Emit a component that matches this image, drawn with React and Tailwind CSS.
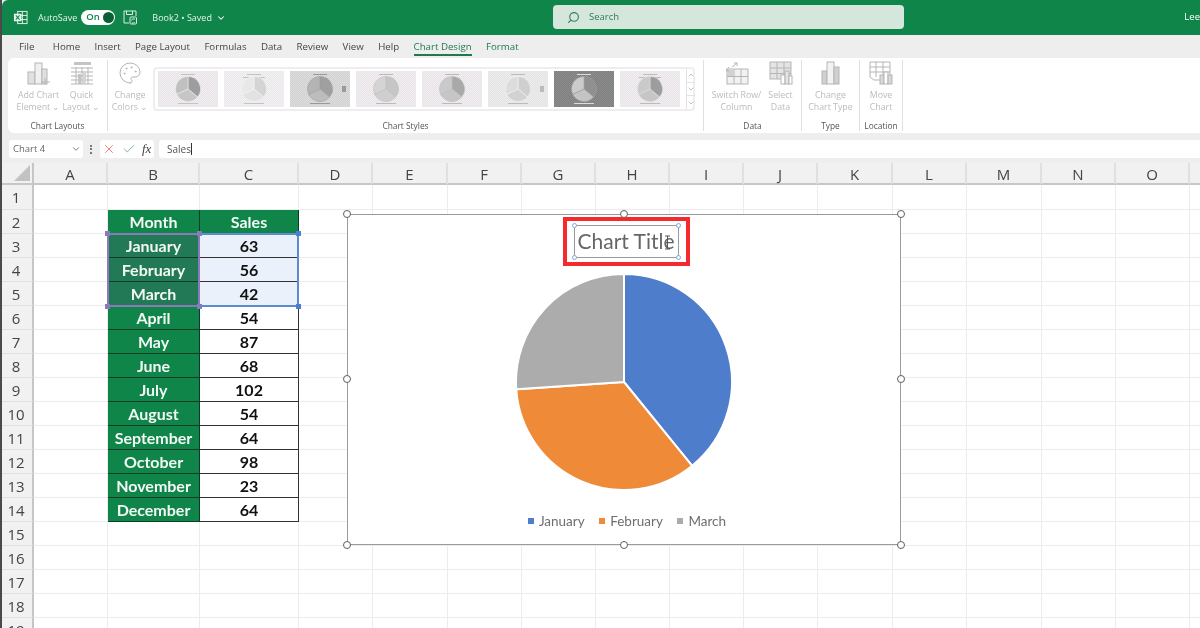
import { Palette, Search, ChevronDown, ChevronUp, Check, X } from 'lucide-react'

const tabs = ['Home', 'Insert', 'Page Layout', 'Formulas', 'Data', 'Review', 'View', 'Help']
const columns = ['A', 'B', 'C', 'D', 'E', 'F', 'G', 'H', 'I', 'J', 'K', 'L', 'M', 'N', 'O', '']
const rowNumbers = Array.from({ length: 19 }, (_, i) => i + 1)
const sales = [
  ['Month', 'Sales'],
  ['January', 63],
  ['February', 56],
  ['March', 42],
  ['April', 54],
  ['May', 87],
  ['June', 68],
  ['July', 102],
  ['August', 54],
  ['September', 64],
  ['October', 98],
  ['November', 23],
  ['December', 64],
]
const slices = [
  { label: 'January', value: 63, color: '#4e7dcb' },
  { label: 'February', value: 56, color: '#ee8a38' },
  { label: 'March', value: 42, color: '#acacac' },
]
const thumbs = [
  { bg: '#f3f0f3', dot: '#e6e2e6', a: '#9d9d9d', b: '#c6c6c6', c: '#c0c0c0', line: '#eeeeee', title: '#c4c4c4' },
  { bg: '#f5f2f5', dot: '#e9e6e9', a: '#d4d4d4', b: '#e2e2e2', c: '#e8e8e8', line: '#f5f5f5', title: '#c4c4c4', sub: true },
  { bg: '#dedede', dot: '#d0d0d0', a: '#a0a0a0', b: '#bcbcbc', c: '#b4b4b4', line: '#9f9f9f', title: '#9a9a9a', legend: true },
  { bg: '#f3f0f3', dot: '#e6e2e6', a: '#c6c6c6', b: '#cfcfcf', c: '#d4d4d4', line: '#bdbdbd', title: '#bbbbbb' },
  { bg: '#f3f0f3', dot: '#e6e2e6', a: '#a9a9a9', b: '#c6c6c6', c: '#cacaca', line: '#bdbdbd', title: '#bbbbbb' },
  { bg: '#ececec', dot: '#e4e4e4', a: '#cfcfcf', b: '#d2d2d2', c: '#dcdcdc', line: '#f5f5f5', title: '#bbbbbb', legend: true },
  { bg: '#8e8e8e', dot: '#7e7e7e', a: '#909090', b: '#c4c4c4', c: '#cbcbcb', line: '#a0a0a0', title: '#dddddd' },
  { bg: '#f3f0f3', dot: '#e6e2e6', a: '#9d9d9d', b: '#c6c6c6', c: '#cacaca', line: '#dddddd', title: '#bbbbbb', sub: true },
]

function slicePath(startDeg, endDeg, r, cx, cy) {
  const a = (startDeg * Math.PI) / 180
  const b = (endDeg * Math.PI) / 180
  const large = endDeg - startDeg > 180 ? 1 : 0
  return `M${cx} ${cy}L${cx + r * Math.sin(a)} ${cy - r * Math.cos(a)}A${r} ${r} 0 ${large} 1 ${cx + r * Math.sin(b)} ${cy - r * Math.cos(b)}Z`
}

function PieChart() {
  const total = slices.reduce((sum, s) => sum + s.value, 0)
  let angle = 0
  return (
    <svg width="220" height="220" viewBox="0 0 220 220" className="block">
      {slices.map((s) => {
        const start = angle
        angle += (s.value / total) * 360
        return <path key={s.label} d={slicePath(start, angle, 108, 110, 110)} fill={s.color} stroke="#fff" strokeWidth="2" />
      })}
    </svg>
  )
}

function Thumb({ index, bg, dot, a, b, c, line, title, sub, legend }) {
  const id = `dither${index}`
  return (
    <svg width="60" height="36" viewBox="0 0 60 36" className="block shrink-0">
      <defs>
        <pattern id={id} width="2" height="2" patternUnits="userSpaceOnUse">
          <rect width="2" height="2" fill={bg} />
          <rect width="1" height="1" fill={dot} />
          <rect x="1" y="1" width="1" height="1" fill={dot} />
        </pattern>
      </defs>
      <rect width="60" height="36" fill={`url(#${id})`} />
      <rect x="23" y="3" width="14" height="1" fill={title} />
      {sub && <rect x="19" y="6" width="22" height="1" fill={title} />}
      <path d={slicePath(0, 130, 12.5, 30, 18)} fill={a} stroke={line} strokeWidth="0.6" />
      <path d={slicePath(130, 245, 12.5, 30, 18)} fill={b} stroke={line} strokeWidth="0.6" />
      <path d={slicePath(245, 360, 12.5, 30, 18)} fill={c} stroke={line} strokeWidth="0.6" />
      <rect x="20" y="32" width="20" height="1" fill={title} />
      {legend && <rect x="52" y="15" width="4" height="6" fill={title} />}
    </svg>
  )
}

function RibbonButton({ icon, lines, width = 'w-[43px]' }) {
  return (
    <div className={`flex flex-col items-center shrink-0 ${width}`}>
      <div className="h-[26px] flex items-center justify-center">{icon}</div>
      <div className="mt-[3px] text-center text-[8.8px] leading-[12px] text-[#bbbbbb] whitespace-nowrap">
        {lines.map((l) => (
          <div key={l}>{l}</div>
        ))}
      </div>
    </div>
  )
}

function Group({ label, width, children, inner = 'justify-center' }) {
  return (
    <div className={`${width} shrink-0 h-[71px] mt-[2px] border-r border-[#e0e0e0] flex flex-col items-center`}>
      <div className={`flex items-start w-full h-[54px] ${inner}`}>{children}</div>
      <div className="mt-auto mb-[-1px] text-[8.4px] leading-[12px] text-[#555] whitespace-nowrap">{label}</div>
    </div>
  )
}

const iconStroke = { fill: 'none', stroke: '#b5b5b5', strokeWidth: 1 }

function AddChartIcon() {
  return (
    <svg width="24" height="25" viewBox="0 0 24 25">
      <rect x="1" y="11" width="7" height="12" fill="#e0e0e0" stroke="#b5b5b5" />
      <rect x="8" y="2" width="7" height="21" fill="#f0f0f0" stroke="#b5b5b5" />
      <rect x="15" y="8" width="5" height="15" fill="#e0e0e0" stroke="#b5b5b5" />
      <path d="M18 17v7M14 21h9" {...iconStroke} />
    </svg>
  )
}

function QuickLayoutIcon() {
  return (
    <svg width="24" height="24" viewBox="0 0 24 24">
      <rect x="4" y="1" width="17" height="3" fill="#c4c4c4" />
      <path d="M1 7h22M1 11h22M1 15h22M1 19h22M1 23h22M6 6v17M12 6v17M18 6v17" {...iconStroke} />
      <rect x="8" y="13" width="3" height="10" fill="#c4c4c4" />
      <rect x="13" y="10" width="3" height="13" fill="#d4d4d4" />
    </svg>
  )
}

function SwitchIcon() {
  return (
    <svg width="24" height="24" viewBox="0 0 24 24">
      <rect x="2" y="8" width="21" height="15" fill="#f2f2f2" stroke="#b5b5b5" />
      <path d="M2 15.5h21M9 8v15M16 8v15" {...iconStroke} />
      <rect x="2" y="8" width="7" height="7" fill="#d2d2d2" />
      <path d="M7 6l5-4M12 2v3M12 2H9M1 10l3-4M1 10h3" {...iconStroke} />
    </svg>
  )
}

function SelectDataIcon() {
  return (
    <svg width="24" height="24" viewBox="0 0 24 24">
      <rect x="1" y="1" width="21" height="17" fill="#e4e4e4" stroke="#b5b5b5" />
      <path d="M1 7h21M1 12.5h21M8 1v17M15 1v17" {...iconStroke} />
      <rect x="12" y="14" width="4" height="9" fill="#fff" stroke="#b5b5b5" />
      <rect x="16" y="10" width="4" height="13" fill="#e4e4e4" stroke="#b5b5b5" />
      <rect x="20" y="15" width="3" height="8" fill="#fff" stroke="#b5b5b5" />
    </svg>
  )
}

function ChangeTypeIcon() {
  return (
    <svg width="20" height="24" viewBox="0 0 20 24">
      <rect x="1" y="10" width="5" height="13" fill="#d0d0d0" stroke="#b5b5b5" />
      <rect x="6" y="1" width="7" height="22" fill="#f2f2f2" stroke="#b5b5b5" />
      <rect x="13" y="6" width="5" height="17" fill="#d0d0d0" stroke="#b5b5b5" />
    </svg>
  )
}

function MoveChartIcon() {
  return (
    <svg width="24" height="24" viewBox="0 0 24 24">
      <path d="M1 1h20v14h-8v4H5l-4-3z" fill="#fff" stroke="#b5b5b5" />
      <path d="M1 6h20M1 11h20M7 1v15M14 1v14" {...iconStroke} />
      <rect x="11" y="14" width="4" height="9" fill="#d8d8d8" stroke="#b5b5b5" />
      <rect x="15" y="11" width="4" height="12" fill="#fff" stroke="#b5b5b5" />
      <rect x="19" y="14" width="4" height="9" fill="#d8d8d8" stroke="#b5b5b5" />
    </svg>
  )
}

function ExcelIcon() {
  return (
    <svg width="15" height="15" viewBox="0 0 16 16">
      <rect x="5" y="1.5" width="10" height="13" fill="none" stroke="#e8f3ec" />
      <path d="M10 1.5v13M5 5.8h10M5 10.2h10" stroke="#e8f3ec" />
      <rect x="1" y="4" width="8" height="8" fill="#e8f3ec" />
      <path d="M3 5.8l4 4.4M7 5.8l-4 4.4" stroke="#0f854a" strokeWidth="1.1" />
    </svg>
  )
}

function SaveIcon() {
  return (
    <svg width="14" height="15" viewBox="0 0 14 15" fill="none" stroke="#dcebe2">
      <path d="M1 1h12v5M1 1v12h5M3.5 1v3.5h6V1" />
      <rect x="7" y="7" width="6.5" height="7" rx="1" />
      <path d="M8.5 10.5a2 2 0 0 1 3.5-1M12 12a2 2 0 0 1-3.2.4" />
    </svg>
  )
}

function Handle({ className }) {
  return <div className={`absolute w-[8px] h-[8px] rounded-full bg-white border-[1.5px] border-[#5f5f5f] ${className}`} />
}

function TitleHandle({ className }) {
  return <div className={`absolute w-[5px] h-[5px] rounded-full bg-white border border-[#7fa8dc] ${className}`} />
}

function Corner({ className }) {
  return <div className={`absolute w-[5px] h-[5px] ${className}`} />
}

function Sheet() {
  return (
    <div className="relative grow overflow-hidden bg-white">
      <div className="grid w-[1300px] grid-cols-[34px_74px_92px_99px_74px_75px_74px_74px_74px_74px_74px_75px_74px_75px_74px_74px_74px] grid-rows-[22px_25px_repeat(18,24px)]">
        <div className="bg-[#f1f1f1] border-r-2 border-b-2 border-[#c6c6c6] flex items-end justify-end pr-[2px] pb-[2px]">
          <div className="w-0 h-0 border-l-[16px] border-l-transparent border-b-[16px] border-b-[#c2c2c2]" />
        </div>
        {columns.map((c, i) => (
          <div key={i} className="bg-[#f1f1f1] border-r-2 border-b-2 border-[#e0e0e0] border-b-[#c6c6c6] flex items-center justify-center pt-[2px] text-[15px] text-[#444] font-['Open_Sans',sans-serif]">
            {c}
          </div>
        ))}
        {rowNumbers.map((n) => {
          const row = sales[n - 2]
          return [
            <div key={`h${n}`} className="bg-[#f1f1f1] border-r-2 border-b border-r-[#c6c6c6] border-b-[#e0e0e0] flex items-center justify-center pt-[1px] text-[15px] text-[#444] font-['Open_Sans',sans-serif]">
              {n}
            </div>,
            ...columns.map((c, i) => {
              const key = `${i}-${n}`
              const selected = n >= 3 && n <= 5
              if (row && c === 'B') {
                return (
                  <div key={key} className={`border-r border-b border-[#0a3d24] flex items-center justify-center pt-[1px] text-[16px] font-bold text-[#f3f8f5] ${selected ? 'bg-[#217a55]' : 'bg-[#0f854a]'}`}>
                    {row[0]}
                  </div>
                )
              }
              if (row && c === 'C') {
                if (n === 2) {
                  return (
                    <div key={key} className="border-r border-b border-[#0a3d24] bg-[#0f854a] flex items-center justify-center pt-[1px] text-[16px] font-bold text-[#f3f8f5]">
                      {row[1]}
                    </div>
                  )
                }
                return (
                  <div key={key} className={`border-r border-b border-[#333] flex items-center justify-center pt-[1px] text-[16px] font-bold text-[#111] ${selected ? 'bg-[#eaf1fa]' : 'bg-white'}`}>
                    {row[1]}
                  </div>
                )
              }
              return <div key={key} className="border-b border-r border-[#ececec]" />
            }),
          ]
        })}
      </div>

      {/* range selection */}
      <div className="absolute left-[107px] top-[70px] w-[93px] h-[74px] border-2 border-[#8a7ab8]">
        <Corner className="-left-[4px] -top-[4px] bg-[#8a7ab8]" />
        <Corner className="-right-[4px] -top-[4px] bg-[#8a7ab8]" />
        <Corner className="-left-[4px] -bottom-[4px] bg-[#8a7ab8]" />
        <Corner className="-right-[4px] -bottom-[4px] bg-[#8a7ab8]" />
      </div>
      <div className="absolute left-[200px] top-[70px] w-[99px] h-[74px] border-y-2 border-r-2 border-[#5f8ad0]">
        <Corner className="-right-[4px] -top-[4px] bg-[#4a7fd4]" />
        <Corner className="-right-[4px] -bottom-[4px] bg-[#4a7fd4]" />
      </div>

      {/* chart */}
      <div className="absolute left-[347px] top-[51px] w-[554px] h-[331px] bg-white border-[1.5px] border-[#9a9a9a] flex flex-col items-center font-['Lato',sans-serif]">
        <Handle className="-left-[5px] -top-[5px]" />
        <Handle className="left-[272px] -top-[5px]" />
        <Handle className="-right-[5px] -top-[5px]" />
        <Handle className="-left-[5px] top-[160px]" />
        <Handle className="-right-[5px] top-[160px]" />
        <Handle className="-left-[5px] -bottom-[5px]" />
        <Handle className="left-[272px] -bottom-[5px]" />
        <Handle className="-right-[5px] -bottom-[5px]" />

        <div className="mt-[2px] ml-[4px] w-[127px] h-[49px] border-[4px] border-[#f52a2f] flex items-center justify-center">
          <div className="relative w-[105px] h-[33px] border border-[#9a9a9a] flex items-center justify-center pb-[2px] text-[21px] text-[#666] whitespace-nowrap">
            Chart Title
            <TitleHandle className="-left-[3px] -top-[3px]" />
            <TitleHandle className="-right-[3px] -top-[3px]" />
            <TitleHandle className="-left-[3px] -bottom-[3px]" />
            <TitleHandle className="-right-[3px] -bottom-[3px]" />
            <svg className="absolute left-[89px] top-[9px]" width="7" height="15" viewBox="0 0 7 15">
              <path d="M1 1h5M3.5 1v13M1 14h5" stroke="#555" fill="none" />
            </svg>
          </div>
        </div>
        <div className="mt-[6px]">
          <PieChart />
        </div>
        <div className="mt-[21px] ml-[6px] flex items-center gap-[14.5px] text-[13.5px] text-[#6e6e6e] leading-[16px]">
          {slices.map((s) => (
            <div key={s.label} className="flex items-center gap-[5px]">
              <svg width="6" height="6" className="block">
                <rect width="6" height="6" fill={s.color} />
              </svg>
              {s.label}
            </div>
          ))}
        </div>
      </div>
    </div>
  )
}

export default function App() {
  return (
    <div className="w-[1200px] h-[628px] overflow-hidden flex flex-col bg-[#eeeeee] border-l-[2px] border-[#4a4a4a] font-['Open_Sans',sans-serif] blur-[0.45px]">
      {/* title bar */}
      <div className="h-[35px] shrink-0 bg-[#0f854a] rounded-tl-[6px] flex items-center text-white text-[9px] pl-[11px] relative">
        <ExcelIcon />
        <span className="ml-[10px] text-[#e6f2eb]">AutoSave</span>
        <div className="ml-[4px] w-[34px] h-[15px] bg-white rounded-full flex items-center justify-between pl-[5px] pr-[1.5px]">
          <span className="text-[#0f854a] text-[9.5px] font-semibold">On</span>
          <span className="w-[11px] h-[11px] rounded-full bg-[#0b5f36]" />
        </div>
        <div className="ml-[8px]">
          <SaveIcon />
        </div>
        <span className="ml-[15px] text-[#e6f2eb] whitespace-nowrap">Book2 • Saved</span>
        <ChevronDown size={10} strokeWidth={2.5} className="ml-[4px]" />
        <div className="absolute left-[551px] top-[5px] w-[351px] h-[24px] rounded-[4px] bg-[#d5e6dd] flex items-center pl-[14px] text-[#2f7d58] text-[9.5px]">
          <Search size={13} className="-scale-x-100" />
          <span className="ml-[9px]">Search</span>
        </div>
        <span className="ml-auto text-[9.5px]">Lee</span>
      </div>

      {/* tabs */}
      <div className="h-[23px] shrink-0 flex items-center gap-[14.4px] pl-[17px] pt-[1px] text-[9.7px] text-[#444] whitespace-nowrap">
        <span className="mr-[4px]">File</span>
        {tabs.map((t) => (
          <span key={t}>{t}</span>
        ))}
        <span className="relative text-[#1f7a4d]">
          Chart Design
          <span className="absolute left-0 right-0 -bottom-[2px] h-[2px] bg-[#1f7a4d]" />
        </span>
        <span className="text-[#1f7a4d]">Format</span>
      </div>

      {/* ribbon */}
      <div className="h-[75px] shrink-0 ml-[6px] bg-white rounded-l-[6px] flex">
        <Group label="Chart Layouts" width="w-[100px]" inner="justify-start pl-[9px]">
          <RibbonButton icon={<AddChartIcon />} lines={['Add Chart', 'Element ⌄']} />
          <RibbonButton icon={<QuickLayoutIcon />} lines={['Quick', 'Layout ⌄']} />
        </Group>
        <Group label="Chart Styles" width="w-[596px]" inner="justify-start">
          <RibbonButton width="w-[44px]" icon={<Palette size={24} strokeWidth={1} className="text-[#b5b5b5]" />} lines={['Change', 'Colors ⌄']} />
          <div className="ml-[1px] mt-[7px] w-[542px] h-[44px] border-2 border-[#eeeeee] rounded-[4px] flex items-center pl-[3px] gap-[6px]">
            {thumbs.map((t, i) => (
              <Thumb key={i} index={i} {...t} />
            ))}
            <div className="ml-auto w-[11px] h-full border-l border-[#e3e3e3] flex flex-col text-[#a5a5a5]">
              <div className="grow flex items-center justify-center border-b border-[#e3e3e3]">
                <ChevronUp size={8} />
              </div>
              <div className="grow flex items-center justify-center border-b border-[#e3e3e3]">
                <ChevronDown size={8} />
              </div>
              <div className="grow flex items-center justify-center">
                <ChevronDown size={8} />
              </div>
            </div>
          </div>
        </Group>
        <Group label="Data" width="w-[98px]" inner="justify-center pl-[4px]">
          <RibbonButton icon={<SwitchIcon />} lines={['Switch Row/', 'Column']} width="w-[52px]" />
          <RibbonButton icon={<SelectDataIcon />} lines={['Select', 'Data']} width="w-[36px]" />
        </Group>
        <Group label="Type" width="w-[58px]">
          <RibbonButton icon={<ChangeTypeIcon />} lines={['Change', 'Chart Type']} width="w-[52px]" />
        </Group>
        <Group label="Location" width="w-[43px]">
          <RibbonButton icon={<MoveChartIcon />} lines={['Move', 'Chart']} width="w-[40px]" />
        </Group>
      </div>

      {/* formula bar */}
      <div className="h-[30px] shrink-0 pt-[7px] flex items-start text-[9.5px] text-[#555]">
        <div className="ml-[7px] w-[74px] h-[18px] bg-white rounded-[3px] flex items-center justify-between pl-[4px] pr-[2px] text-[#666]">
          Chart 4
          <ChevronDown size={10} strokeWidth={2} />
        </div>
        <span className="ml-[7px] w-[3px] h-[18px] flex flex-col justify-center gap-[1.5px]">
          <i className="block w-[2px] h-[2px] bg-[#777]" />
          <i className="block w-[2px] h-[2px] bg-[#777]" />
          <i className="block w-[2px] h-[2px] bg-[#777]" />
        </span>
        <div className="ml-[7px] w-[54px] h-[18px] bg-white rounded-[3px] flex items-center pl-[2px] gap-[6px]">
          <X size={14} strokeWidth={1.2} className="text-[#ea4a47]" />
          <Check size={14} strokeWidth={1.4} className="text-[#5fa87f]" />
          <span className="font-['Liberation_Serif',serif] italic text-[13px] text-[#444]">fx</span>
        </div>
        <div className="ml-[5px] grow h-[18px] bg-white rounded-l-[3px] flex items-center pl-[8px] text-[10px] text-[#555]">
          Sales
          <span className="w-px h-[12px] bg-[#333]" />
        </div>
      </div>

      <div className="grow flex flex-col -ml-[2px] font-['Lato',sans-serif]">
        <Sheet />
      </div>
    </div>
  )
}
